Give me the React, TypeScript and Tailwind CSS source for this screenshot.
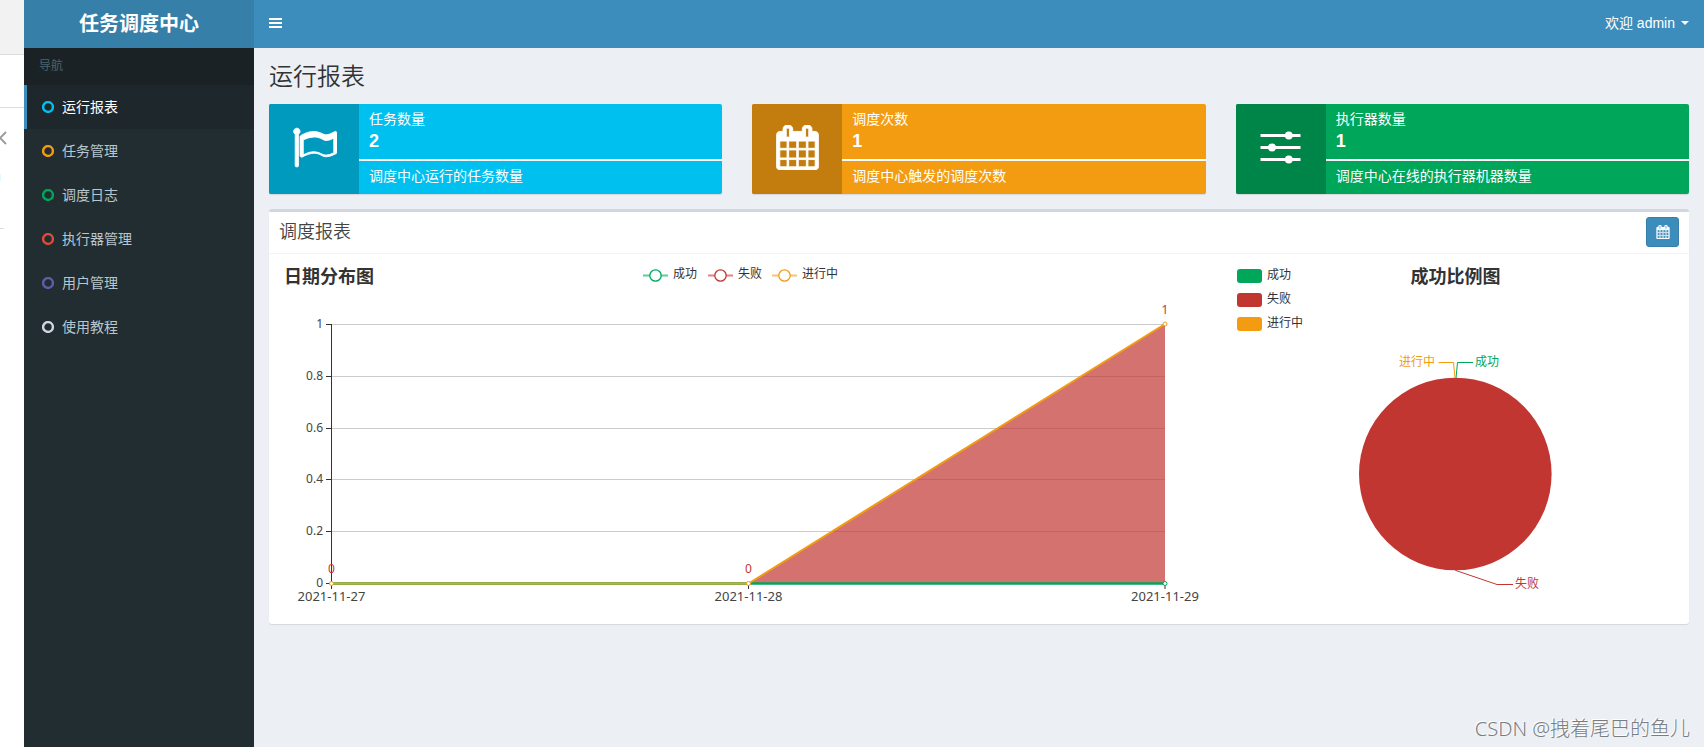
import React from "react";

const GREEN = "#00a65a";
const RED = "#c23632";
const ORANGE = "#f39c12";

const navItems = [
  { label: "运行报表", ring: "text-[#00c0ef]", active: true },
  { label: "任务管理", ring: "text-[#f39c12]" },
  { label: "调度日志", ring: "text-[#00a65a]" },
  { label: "执行器管理", ring: "text-[#dd4b39]" },
  { label: "用户管理", ring: "text-[#605ca8]" },
  { label: "使用教程", ring: "text-[#d2d6de]" },
];

const CALENDAR_PATH =
  "M192 1664h288v-288h-288v288zm352 0h320v-288h-320v288zm-352-352h288v-320h-288v320zm352 0h320v-320h-320v320zm-352-384h288v-288h-288v288zm736 736h320v-288h-320v288zm-384-736h320v-288h-320v288zm768 736h288v-288h-288v288zm-384-352h320v-320h-320v320zm-352-864v-288q0-13-9.5-22.5t-22.5-9.5h-64q-13 0-22.5 9.5t-9.5 22.5v288q0 13 9.5 22.5t22.5 9.5h64q13 0 22.5-9.5t9.5-22.5zm736 864h288v-320h-288v320zm-384-384h320v-288h-320v288zm384 0h288v-288h-288v288zm32-480v-288q0-13-9.5-22.5t-22.5-9.5h-64q-13 0-22.5 9.5t-9.5 22.5v288q0 13 9.5 22.5t22.5 9.5h64q13 0 22.5-9.5t9.5-22.5zm384-64v1280q0 52-38 90t-90 38h-1408q-52 0-90-38t-38-90v-1280q0-52 38-90t90-38h128v-96q0-66 47-113t113-47h64q66 0 113 47t47 113v96h384v-96q0-66 47-113t113-47h64q66 0 113 47t47 113v96h128q52 0 90 38t38 90z";

function CalendarIcon({ className }: { className: string }) {
  return (
    <svg viewBox="0 0 1792 1792" className={className} fill="currentColor" aria-hidden="true">
      <path d={CALENDAR_PATH} stroke="currentColor" strokeWidth="36" />
    </svg>
  );
}

function FlagIcon({ className }: { className: string }) {
  return (
    <svg viewBox="0 0 1792 1792" className={className} fill="currentColor" fillRule="evenodd" aria-hidden="true">
      <path
        stroke="currentColor"
        strokeWidth="36"
        d="M1664 491v616q-169 91-306 91-82 0-145-32-100-49-184-76.5t-178-27.5q-173 0-403 127v-599q245-113 433-113 55 0 103.5 7.5t98 26 77 31 82.500 39.500l28 14q44 22 101 22 120 0 293-92zM320 256q0 35-17.5 64t-46.5 46v1266q0 14-9 23t-23 9h-64q-14 0-23-9t-9-23v-1266q-29-17-46.5-46t-17.5-64q0-53 37.5-90.5t90.5-37.5 90.5 37.5 37.5 90.5zM1792 320v763q0 39-35 57-10 5-17 9-218 116-369 116-88 0-158-35l-28-14q-64-33-99-48t-91-29-114-14q-102 0-235.5 44t-228.5 102q-15 9-33 9-16 0-32-8-32-19-32-56v-742q0-35 31-55 35-21 78.500-42.5t114-52 152.500-49.5 155-19q112 0 209 31t209 86q38 19 89 19 122 0 310-112 22-12 31-17 31-16 62 2 31 20 31 55z"
      />
    </svg>
  );
}

function SlidersIcon({ className }: { className: string }) {
  return (
    <svg viewBox="0 0 45 45" className={className} fill="currentColor" aria-hidden="true">
      <path d="M2.500 9h40v3h-40zM2.500 21h40v3h-40zM2.500 33h40v3h-40z" />
      <circle cx="30.800" cy="10.500" r="3.900" />
      <circle cx="14" cy="22.500" r="3.900" />
      <circle cx="30.800" cy="34.500" r="3.900" />
    </svg>
  );
}

const stats = [
  {
    title: "任务数量",
    value: "2",
    note: "调度中心运行的任务数量",
    bg: "bg-[#00c0ef]",
    iconBg: "bg-[#009abf]",
    icon: <FlagIcon className="size-[45px]" />,
  },
  {
    title: "调度次数",
    value: "1",
    note: "调度中心触发的调度次数",
    bg: "bg-[#f39c12]",
    iconBg: "bg-[#c27d0e]",
    icon: <CalendarIcon className="size-[45px]" />,
  },
  {
    title: "执行器数量",
    value: "1",
    note: "调度中心在线的执行器机器数量",
    bg: "bg-[#00a65a]",
    iconBg: "bg-[#008548]",
    icon: <SlidersIcon className="size-[45px]" />,
  },
];

const yTicks = [
  { label: "1", y: 60.5 },
  { label: "0.8", y: 112.5 },
  { label: "0.6", y: 164.5 },
  { label: "0.4", y: 215.5 },
  { label: "0.2", y: 267.5 },
  { label: "0", y: 319.5 },
];

const days = [
  { label: "2021-11-27", x: 52.5 },
  { label: "2021-11-28", x: 469.5 },
  { label: "2021-11-29", x: 886 },
];

const series = [
  { label: "成功", color: GREEN, x: 364 },
  { label: "失败", color: RED, x: 429 },
  { label: "进行中", color: ORANGE, x: 493 },
];

const chartFont = "font-['Noto_Sans','Noto_Sans_CJK_SC',sans-serif]";

function DateChart() {
  return (
    <svg viewBox="0 0 923 350" className={`block w-full ${chartFont}`} role="img" aria-label="日期分布图">
      <text x="5" y="19" className="text-[18px] font-bold" fill="#333">
        日期分布图
      </text>

      {series.map((s) => (
        <g key={s.label}>
          <path d={`M${s.x} 11.500h25`} stroke={s.color} strokeWidth="2" opacity="0.6" />
          <circle cx={s.x + 12.5} cy="11.500" r="5.700" fill="#fff" stroke={s.color} strokeWidth="1.300" />
          <text x={s.x + 30} y="14" className="text-[12px]" fill="#333">
            {s.label}
          </text>
        </g>
      ))}

      {yTicks.map((t) => (
        <g key={t.label}>
          <path d={`M52 ${t.y}H886`} stroke={t.label === "0" ? "#333" : "#ccc"} />
          <path d={`M47 ${t.y}h5`} stroke="#333" />
          <text x="44" y={t.y + 3.5} textAnchor="end" className="text-[12px]" fill="#444">
            {t.label}
          </text>
        </g>
      ))}
      <path d="M52.500 60v260" stroke="#333" />
      {days.map((d) => (
        <g key={d.label}>
          <path d={`M${d.x} 320v5`} stroke="#333" />
          <text x={d.x} y="337" textAnchor="middle" className="text-[13px]" fill="#444">
            {d.label}
          </text>
        </g>
      ))}

      <path d="M469.500 319.500L886 60V319.500z" fill={RED} opacity="0.7" />
      <path d="M52.500 319.500H886" stroke={GREEN} strokeOpacity="0.5" strokeWidth="3" />
      <path d="M52.500 319.500H886" stroke={GREEN} strokeWidth="2" />
      <path d="M52.500 319.500H469.500L886 60" fill="none" stroke={ORANGE} strokeWidth="2" />
      <circle cx="886" cy="319.500" r="2" fill="#fff" stroke={GREEN} />
      <circle cx="52.500" cy="319.500" r="2" fill="#fff" stroke={ORANGE} />
      <circle cx="469.500" cy="319.500" r="2" fill="#fff" stroke={ORANGE} />
      <circle cx="886" cy="60" r="2" fill="#fff" stroke={ORANGE} />

      <g className="text-[12px]" fill={RED} textAnchor="middle">
        <text x="52.500" y="309">0</text>
        <text x="469.500" y="309">0</text>
        <text x="886" y="50">1</text>
      </g>
    </svg>
  );
}

function RatioChart() {
  return (
    <svg viewBox="0 0 447 350" className={`block w-full ${chartFont}`} role="img" aria-label="成功比例图">
      {series.map((s, i) => (
        <g key={s.label}>
          <rect x="5" y={5 + i * 24} width="25" height="14" rx="3" fill={s.color} />
          <text x="35" y={15 + i * 24} className="text-[12px]" fill="#333">
            {s.label}
          </text>
        </g>
      ))}
      <text x="223.500" y="19" textAnchor="middle" className="text-[18px] font-bold" fill="#333">
        成功比例图
      </text>

      <circle cx="223.300" cy="210" r="96.300" fill={RED} />
      <path d="M224 114L225.500 98.500H241" fill="none" stroke={GREEN} />
      <path d="M223 114L221.500 98.500H206.500" fill="none" stroke={ORANGE} />
      <path d="M223.300 306.300L265 320.500H281" fill="none" stroke={RED} />
      <g className="text-[12px]">
        <text x="243" y="102" fill={GREEN}>成功</text>
        <text x="203" y="102" textAnchor="end" fill={ORANGE}>进行中</text>
        <text x="283" y="324" fill={RED}>失败</text>
      </g>
    </svg>
  );
}

export default function App() {
  return (
    <div className="relative flex min-h-screen bg-[#ecf0f5] font-['Liberation_Sans','Noto_Sans_CJK_SC',sans-serif] text-[14px] leading-[20px] text-[#333]">
      <div className="w-6 shrink-0 bg-white" aria-hidden="true">
        <div className="h-[55px] border-b border-[#ddd] bg-[#f2f2f2]" />
        <div className="h-[53px] border-b border-[#ddd]" />
        <svg viewBox="0 0 24 120" className="block h-[120px] w-6" fill="none">
          <path d="M6 24L0 30L6 36" stroke="#999" strokeWidth="1.800" />
          <path d="M0 66v7" stroke="#dffaff" strokeWidth="2" />
        </svg>
        <div className="h-px w-1 bg-[#ddd]" />
      </div>

      <aside className="flex w-[230px] shrink-0 flex-col bg-[#222d32]">
        <a href="#" className="flex h-12 items-center justify-center bg-[#367fa9] text-[20px] font-bold text-white">
          任务调度中心
        </a>
        <nav>
          <h2 className="h-[37px] bg-[#1a2226] px-[15px] py-2 text-[12px] text-[#4b646f]">导航</h2>
          <ul>
            {navItems.map((item) => (
              <li key={item.label}>
                <a
                  href="#"
                  className={
                    item.active
                      ? "flex h-11 items-center gap-2 border-l-[3px] border-[#3c8dbc] bg-[#1e282c] px-[15px] text-white"
                      : "flex h-11 items-center gap-2 border-l-[3px] border-transparent px-[15px] text-[#b8c7ce]"
                  }
                >
                  <svg viewBox="0 0 12 12" className={`size-3 ${item.ring}`} fill="none" aria-hidden="true">
                    <circle cx="6" cy="6" r="4.900" stroke="currentColor" strokeWidth="2.400" />
                  </svg>
                  {item.label}
                </a>
              </li>
            ))}
          </ul>
        </nav>
      </aside>

      <div className="flex min-w-0 flex-1 flex-col">
        <header className="flex h-12 items-center justify-between bg-[#3c8dbc] px-[15px] pb-[2px] text-white">
          <button type="button" aria-label="切换导航">
            <svg viewBox="0 0 13 10" className="block h-[10px] w-[13px]" fill="currentColor">
              <path d="M0 0h13v2H0zM0 4h13v2H0zM0 8h13v2H0z" />
            </svg>
          </button>
          <button type="button" className="flex items-center gap-[6px]">
            欢迎 admin
            <svg viewBox="0 0 8 4" className="h-1 w-2" fill="currentColor" aria-hidden="true">
              <path d="M0 0h8L4 4z" />
            </svg>
          </button>
        </header>

        <main className="px-[15px] pt-4 pb-[15px]">
          <h1 className="mb-[14px] text-[24px] leading-[26px] font-[350]">运行报表</h1>

          <div className="mb-[15px] grid grid-cols-3 gap-[30px]">
            {stats.map((s) => (
              <section
                key={s.title}
                className={`flex h-[90px] overflow-hidden rounded-[2px] text-white shadow-[0_1px_1px_rgba(0,0,0,0.1)] ${s.bg}`}
              >
                <div className={`flex w-[90px] shrink-0 items-center justify-center pb-1 ${s.iconBg}`}>{s.icon}</div>
                <div className="flex flex-1 flex-col">
                  <div className="px-[10px] pt-[5px]">{s.title}</div>
                  <div className="px-[10px] pb-[6px] text-[18px] leading-[24px] font-bold">{s.value}</div>
                  <div className="h-[2px] bg-white" />
                  <div className="px-[10px] pt-[5px]">{s.note}</div>
                </div>
              </section>
            ))}
          </div>

          <section className="rounded-[3px] border-t-[3px] border-[#d2d6de] bg-white shadow-[0_1px_1px_rgba(0,0,0,0.1)]">
            <div className="flex h-[42px] items-center justify-between border-b border-[#f4f4f4] px-[10px] pb-[2px]">
              <h2 className="text-[18px] font-[350] text-[#444]">调度报表</h2>
              <button
                type="button"
                aria-label="选择日期范围"
                className="flex h-[30px] w-[33px] items-center justify-center rounded-[3px] border border-[#367fa9] bg-[#3c8dbc] text-white"
              >
                <CalendarIcon className="size-[14px]" />
              </button>
            </div>
            <div className="grid grid-cols-[923fr_447fr] gap-[30px] p-[10px]">
              <DateChart />
              <RatioChart />
            </div>
          </section>
        </main>
      </div>

      <div className="absolute right-[14px] bottom-1 font-['Noto_Sans','Noto_Sans_CJK_SC',sans-serif] text-[20px] leading-[28px] font-light text-[#7a7d80] [text-shadow:-1px_-1px_0_#fff]">
        CSDN @拽着尾巴的鱼儿
      </div>
    </div>
  );
}
